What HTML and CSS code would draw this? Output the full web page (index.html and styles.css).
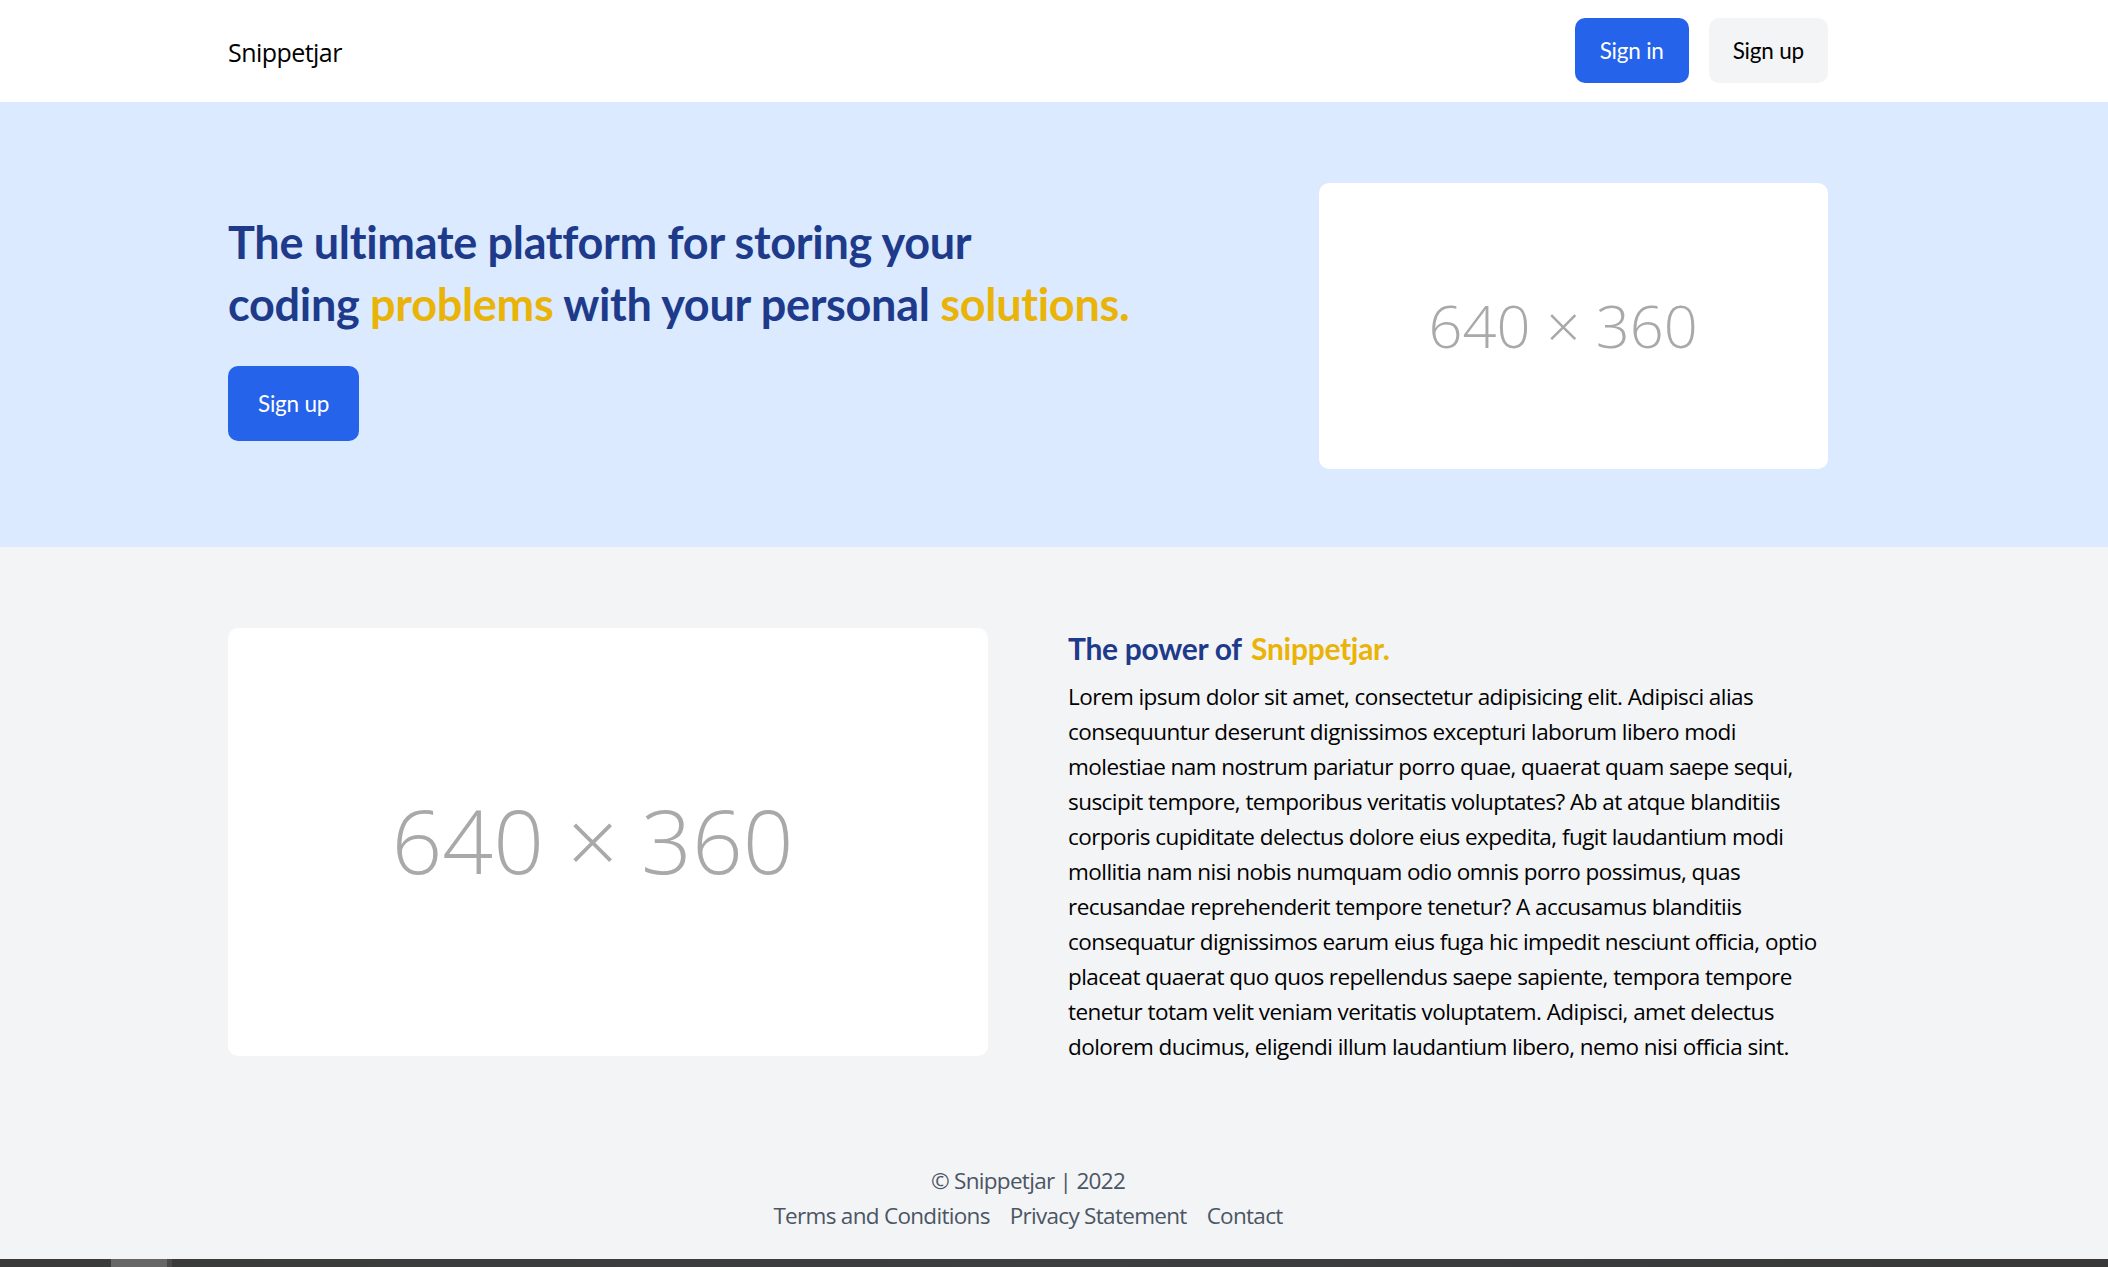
FILE: index.html
```html
<!DOCTYPE html>
<html lang="en">
<head>
<meta charset="utf-8">
<title>Snippetjar</title>
<link rel="stylesheet" href="styles.css">
</head>
<body>
<header class="nav">
  <div class="container nav-inner">
    <a class="logo" href="#">Snippetjar</a>
    <div class="nav-actions">
      <a class="btn btn-primary" href="#">Sign in</a>
      <a class="btn btn-light" href="#">Sign up</a>
    </div>
  </div>
</header>

<section class="hero">
  <div class="container hero-inner">
    <div class="hero-text">
      <h1 class="hero-title">The ultimate platform for storing your<br>coding <span class="accent">problems</span> with your personal <span class="accent">solutions.</span></h1>
      <a class="btn btn-primary btn-big" href="#">Sign up</a>
    </div>
    <div class="placeholder hero-img">
      <svg viewBox="0 0 640 360" class="ph-svg"><text x="307" y="207" class="ph-text">640 × 360</text></svg>
    </div>
  </div>
</section>

<main class="features">
  <div class="container features-grid">
    <div class="placeholder feature-img">
      <svg viewBox="0 0 640 360" class="ph-svg"><text x="307" y="207" class="ph-text">640 × 360</text></svg>
    </div>
    <div class="feature-text">
      <h2 class="feature-title">The power of <span class="accent accent-gap">Snippetjar.</span></h2>
      <p class="feature-body">Lorem ipsum dolor sit amet, consectetur adipisicing elit. Adipisci alias consequuntur deserunt dignissimos excepturi laborum libero modi molestiae nam nostrum pariatur porro quae, quaerat quam saepe sequi, suscipit tempore, temporibus veritatis voluptates? Ab at atque blanditiis corporis cupiditate delectus dolore eius expedita, fugit laudantium modi mollitia nam nisi nobis numquam odio omnis porro possimus, quas recusandae reprehenderit tempore tenetur? A accusamus blanditiis consequatur dignissimos earum eius fuga hic impedit nesciunt officia, optio placeat quaerat quo quos repellendus saepe sapiente, tempora tempore tenetur totam velit veniam veritatis voluptatem. Adipisci, amet delectus dolorem ducimus, eligendi illum laudantium libero, nemo nisi officia sint.</p>
    </div>
  </div>
</main>

<footer class="footer">
  <div class="container footer-inner">
    <div class="copy">© Snippetjar | 2022</div>
    <nav class="footer-links">
      <a href="#">Terms and Conditions</a>
      <a href="#">Privacy Statement</a>
      <a href="#">Contact</a>
    </nav>
  </div>
</footer>

<div class="bottom-bar"><div class="bar-thumb"></div><div class="bar-notch"></div></div>
</body>
</html>
```

FILE: styles.css
```css
* { box-sizing: border-box; }

html, body {
  margin: 0;
  padding: 0;
}

body {
  background: #f3f4f6;
  font-family: "Open Sans", "Noto Sans", sans-serif;
  color: #000;
}

a { text-decoration: none; color: inherit; }

.container {
  width: 1600px;
  margin-left: calc(50% - 826px);
}

/* NAV */
.nav {
  background: #ffffff;
  height: 102px;
}

.nav-inner {
  height: 102px;
  display: flex;
  align-items: center;
  justify-content: space-between;
}

.logo {
  font-family: "Open Sans", sans-serif;
  font-size: 25px;
  line-height: 35px;
  letter-spacing: -0.55px;
  color: #000;
  padding-top: 2px;
}

.nav-actions {
  display: flex;
  gap: 20px;
  padding-bottom: 2px;
}

.btn {
  display: inline-block;
  font-family: Lato, sans-serif;
  font-weight: 400;
  font-size: 22.5px;
  line-height: 35px;
  padding: 15px 25px;
  border-radius: 10px;
  letter-spacing: -0.2px;
}

.btn-primary {
  background: #2563eb;
  color: #ffffff;
}

.btn-light {
  background: #f3f4f6;
  color: #000;
  padding-left: 24px;
  padding-right: 24px;
}

.btn-big {
  padding: 20px 30px;
}

/* HERO */
.hero {
  background: #dbeafe;
  padding: 81px 0 78px;
}

.hero-inner {
  display: flex;
  align-items: center;
  justify-content: space-between;
}

.hero-text {
  display: flex;
  flex-direction: column;
  align-items: flex-start;
}

.hero-title {
  margin: 0 0 30px;
  font-family: Lato, sans-serif;
  font-weight: 700;
  font-size: 45px;
  line-height: 61.875px;
  color: #1e3a8a;
  letter-spacing: -0.3px;
}

.accent { color: #eab308; }
.accent-gap { margin-left: 3px; }

.placeholder {
  background: #ffffff;
  border-radius: 10px;
  overflow: hidden;
  aspect-ratio: 16 / 9;
}

.hero-img { width: 509px; }

.ph-svg {
  display: block;
  width: 100%;
  height: 100%;
}

.ph-text {
  font-family: "Open Sans", sans-serif;
  font-weight: 300;
  font-size: 75px;
  fill: #a9a9a9;
  text-anchor: middle;
}

/* FEATURES */
.features {
  padding: 81px 0 80px;
}

.features-grid {
  display: grid;
  grid-template-columns: 760px 760px;
  column-gap: 80px;
  align-items: start;
}

.feature-img { width: 760px; }

.feature-title {
  margin: 0;
  font-family: Lato, sans-serif;
  font-weight: 700;
  font-size: 30px;
  line-height: 40px;
  color: #1e3a8a;
  letter-spacing: -0.3px;
}

.feature-body {
  margin: 11px 0 0;
  font-size: 22.5px;
  line-height: 35px;
  letter-spacing: -0.55px;
  color: #000;
}

/* FOOTER */
.footer {
  padding: 19px 0 14px;
}

.footer-inner {
  display: flex;
  flex-direction: column;
  align-items: center;
  color: #4b5563;
  font-size: 22.5px;
  line-height: 35px;
  letter-spacing: -0.7px;
}

.footer-links {
  display: flex;
  gap: 20px;
}

/* bottom strip */
.bottom-bar {
  position: fixed;
  left: 0;
  right: 0;
  bottom: 0;
  height: 8px;
  background: linear-gradient(90deg, #3a3a3a 0%, #3d3e40 50%, #383838 100%);
  display: flex;
}

.bar-thumb {
  margin-left: 111px;
  width: 56px;
  background: #676767;
}

.bar-notch {
  width: 5px;
  background: #4a4a4a;
}
```
